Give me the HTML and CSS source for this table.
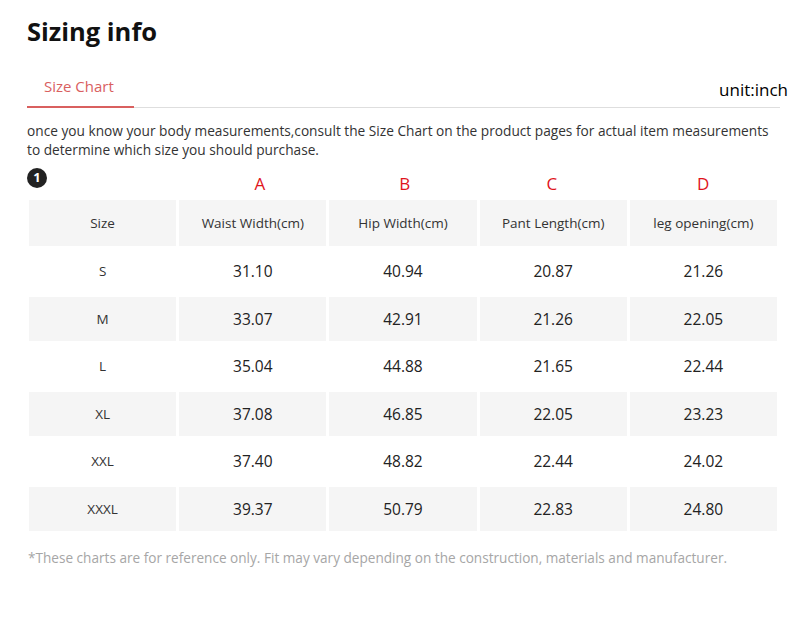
FILE: index.html
```html
<!DOCTYPE html>
<html lang="en">
<head>
<meta charset="utf-8">
<title>Sizing info</title>
<link rel="stylesheet" href="styles.css">
</head>
<body>
<div class="page">
  <h1 class="title">Sizing info</h1>
  <div class="tabs">
    <div class="tab active">Size Chart</div>
    <div class="unit">unit:inch</div>
  </div>
  <p class="intro">once you know your body measurements,consult the Size Chart on the product pages for actual item measurements to determine which size you should purchase.</p>
  <div class="marker-row">
    <span class="badge">1</span>
  </div>
  <div class="letters">
    <span></span>
    <span class="l-a">A</span>
    <span class="l-b">B</span>
    <span class="l-c">C</span>
    <span class="l-d">D</span>
  </div>
  <table class="chart">
    <thead>
      <tr><th>Size</th><th>Waist Width(cm)</th><th>Hip Width(cm)</th><th>Pant Length(cm)</th><th>leg opening(cm)</th></tr>
    </thead>
    <tbody>
      <tr><td class="sz">S</td><td>31.10</td><td>40.94</td><td>20.87</td><td>21.26</td></tr>
      <tr class="alt"><td class="sz">M</td><td>33.07</td><td>42.91</td><td>21.26</td><td>22.05</td></tr>
      <tr><td class="sz">L</td><td>35.04</td><td>44.88</td><td>21.65</td><td>22.44</td></tr>
      <tr class="alt"><td class="sz">XL</td><td>37.08</td><td>46.85</td><td>22.05</td><td>23.23</td></tr>
      <tr><td class="sz">XXL</td><td>37.40</td><td>48.82</td><td>22.44</td><td>24.02</td></tr>
      <tr class="alt"><td class="sz">XXXL</td><td>39.37</td><td>50.79</td><td>22.83</td><td>24.80</td></tr>
    </tbody>
  </table>
  <p class="note">*These charts are for reference only. Fit may vary depending on the construction, materials and manufacturer.</p>
</div>
</body>
</html>
```

FILE: styles.css
```css
* { box-sizing: border-box; }
html, body { margin: 0; padding: 0; background: #fff; }
body { font-family: "Open Sans", "Liberation Sans", sans-serif; color: #222; }

.page { padding: 15px 12px 0 27px; width: 800px; }

.title {
  margin: 0;
  font-size: 25.5px;
  font-weight: 700;
  line-height: 32px;
  color: #111;
}

.tabs {
  margin-top: 29px;
  display: flex;
  justify-content: space-between;
  align-items: flex-end;
  border-bottom: 1px solid #dedede;
  width: 753px;
}
.tab {
  font-size: 15px;
  line-height: 20px;
  padding: 0 17px 10px 17px;
  width: 107px;
  color: #d9605f;
  border-bottom: 2px solid #d9605f;
  margin-bottom: -1px;
}
.unit {
  font-size: 17px;
  line-height: 22px;
  color: #000;
  margin-right: -8px;
  margin-bottom: 6px;
}

.intro {
  margin: 13px 0 0 0;
  font-size: 13.7px;
  line-height: 19px;
  color: #333;
  width: 750px;
}

.marker-row { margin-top: 6px; height: 20px; }
.badge {
  display: inline-flex;
  align-items: center;
  justify-content: center;
  width: 20px;
  height: 20px;
  border-radius: 50%;
  background: #222;
  color: #fff;
  font-size: 13px;
  font-weight: 700;
  line-height: 1;
}

.letters {
  display: grid;
  grid-template-columns: repeat(5, 146.5px);
  column-gap: 3px;
  margin-left: 2px;
  margin-top: -11px;
  height: 20px;
  font-size: 17px;
  line-height: 20px;
  color: #e0141c;
  text-align: center;
}
.l-a { padding-left: 16px; }
.l-b { padding-left: 7px; }
.l-c { padding-left: 2px; }
.l-d { padding-left: 6px; }

.chart {
  border-collapse: separate;
  border-spacing: 3px;
  margin: 3px 0 0 -1px;
  table-layout: fixed;
  width: 754px;
}
.chart th, .chart td {
  text-align: center;
  vertical-align: middle;
  padding: 0;
}
.chart th {
  background: #f5f5f5;
  height: 46px;
  font-size: 13.5px;
  font-weight: 400;
  color: #333;
}
.chart td {
  height: 44.5px;
  font-size: 15.5px;
  color: #222;
}
.chart td.sz { font-size: 13.5px; color: #333; }
.chart tr.alt td { background: #f5f5f5; }

.note {
  margin: 15px 0 0 1px;
  font-size: 13.6px;
  line-height: 18px;
  color: #a6a6a6;
}
```
